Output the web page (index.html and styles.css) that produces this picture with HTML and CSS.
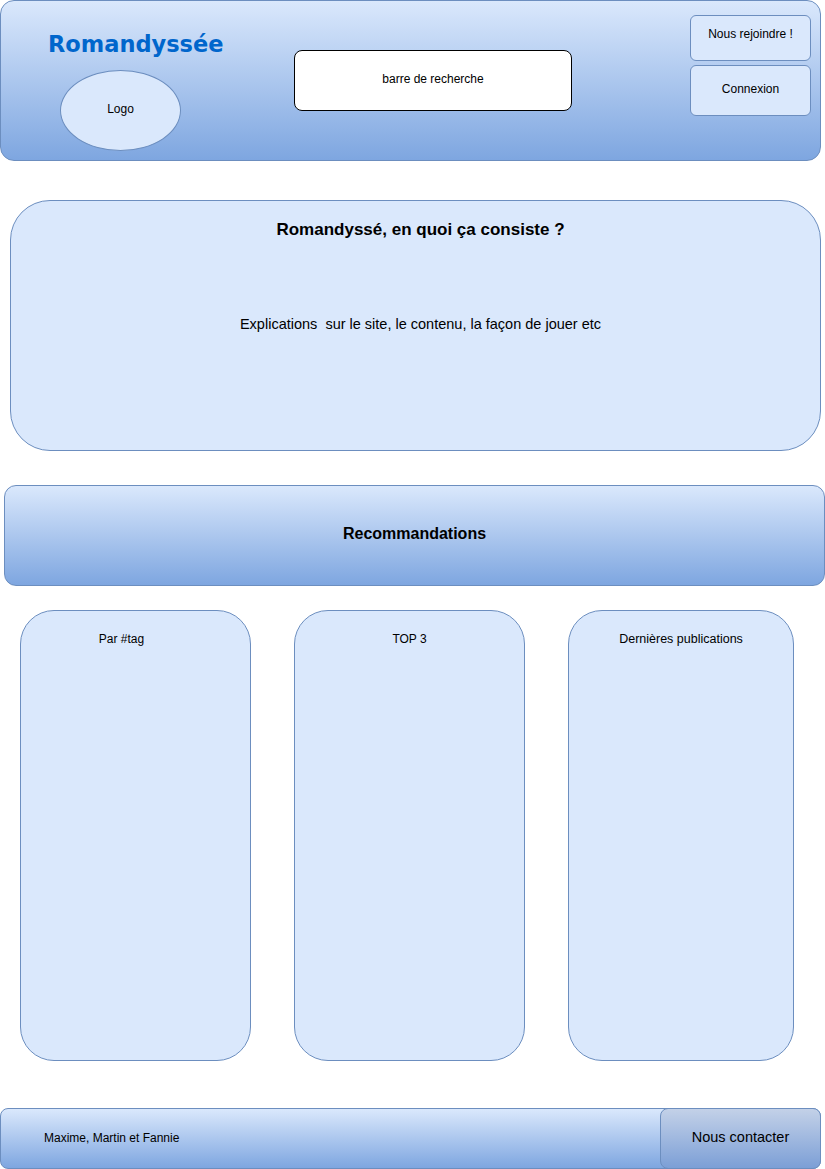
FILE: index.html
```html
<!DOCTYPE html>
<html lang="fr">
<head>
	<meta charset="utf-8">
	<title>Romandyssée</title>
	<link rel="stylesheet" href="styles.css">
</head>
<body>

<div class="header">
	<div class="brand">
		<h1 class="site-title">Romandyssée</h1>
		<div class="logo">Logo</div>
	</div>
	<div class="search">barre de recherche</div>
	<div class="account">
		<div class="btn btn-join">Nous rejoindre !</div>
		<div class="btn btn-login">Connexion</div>
	</div>
</div>

<div class="intro">
	<h2 class="intro-title">Romandyssé, en quoi ça consiste ?</h2>
	<p class="intro-text">Explications&nbsp; sur le site, le contenu, la façon de jouer etc</p>
</div>

<div class="reco">Recommandations</div>

<div class="columns">
	<div class="col col-tag">Par #tag</div>
	<div class="col col-top">TOP 3</div>
	<div class="col col-last">Dernières publications</div>
</div>

<div class="footer">
	<span class="authors">Maxime, Martin et Fannie</span>
	<div class="contact">Nous contacter</div>
</div>

</body>
</html>
```

FILE: styles.css
```css
body {
	margin: 0;
	font-family: "Liberation Sans", Arial, sans-serif;
	color: #000;
	background: #fff;
}

.header {
	box-sizing: border-box;
	width: 821px;
	height: 161px;
	display: flex;
	padding-left: 47px;
	border: 1px solid #6c8ebf;
	border-radius: 14px;
	background: linear-gradient(#dae8fc, #7ea6e0);
}
.brand {
	width: 246px;
}
.site-title {
	margin: 29px 0 0 0;
	font-family: "DejaVu Sans", Verdana, sans-serif;
	font-size: 22.5px;
	line-height: 28px;
	color: #0066cc;
}
.logo {
	box-sizing: border-box;
	width: 121px;
	height: 81px;
	margin: 12px 0 0 12px;
	border: 1px solid #6c8ebf;
	border-radius: 50%;
	background: #dae8fc;
	font-size: 12px;
	display: flex;
	align-items: center;
	justify-content: center;
	padding-bottom: 4px;
}
.search {
	box-sizing: border-box;
	width: 278px;
	height: 61px;
	margin-top: 49px;
	border: 1px solid #000;
	border-radius: 8px;
	background: #fff;
	font-size: 12px;
	text-align: center;
	padding-top: 21px;
}
.account {
	margin: 14px 0 0 118px;
	display: flex;
	flex-direction: column;
	gap: 4px;
}
.btn {
	box-sizing: border-box;
	width: 121px;
	border: 1px solid #6c8ebf;
	border-radius: 6px;
	background: #dae8fc;
	font-size: 12px;
	text-align: center;
}
.btn-join {
	height: 46px;
	padding-top: 11px;
}
.btn-login {
	height: 51px;
	padding-top: 16px;
}

.intro {
	box-sizing: border-box;
	width: 811px;
	height: 251px;
	margin: 39px 0 0 10px;
	padding-left: 10px;
	border: 1px solid #6c8ebf;
	border-radius: 40px;
	background: #dae8fc;
	text-align: center;
}
.intro-title {
	margin: 19px 0 0 0;
	font-size: 17px;
	line-height: 20px;
}
.intro-text {
	margin: 74px 0 0 0;
	font-size: 14.5px;
	line-height: 20px;
}

.reco {
	box-sizing: border-box;
	width: 821px;
	height: 101px;
	margin: 34px 0 0 4px;
	border: 1px solid #6c8ebf;
	border-radius: 12px;
	background: linear-gradient(#dae8fc, #7ea6e0);
	font-size: 16px;
	font-weight: bold;
	display: flex;
	align-items: center;
	justify-content: center;
	padding-bottom: 4px;
}

.columns {
	display: flex;
	gap: 43px;
	margin: 24px 0 0 20px;
}
.col {
	box-sizing: border-box;
	width: 231px;
	height: 451px;
	border: 1px solid #6c8ebf;
	border-radius: 34px;
	background: #dae8fc;
	font-size: 12px;
	text-align: center;
	padding-top: 21px;
}
.col-tag {
	padding-right: 28px;
}
.col-last {
	width: 226px;
	font-size: 12.5px;
}

.footer {
	box-sizing: border-box;
	width: 821px;
	height: 61px;
	margin-top: 47px;
	display: flex;
	align-items: center;
	border: 1px solid #6c8ebf;
	border-radius: 8px;
	background: linear-gradient(#dae8fc, #7ea6e0);
}
.authors {
	flex: 1;
	padding: 0 0 2px 43px;
	font-size: 12px;
}
.contact {
	box-sizing: border-box;
	width: 161px;
	height: 61px;
	margin: -1px -1px -1px 0;
	border: 1px solid #6c8ebf;
	border-radius: 8px;
	background: linear-gradient(#c3d1e8, #7c9fd6);
	font-size: 14.5px;
	display: flex;
	align-items: center;
	justify-content: center;
	padding-bottom: 4px;
}
```
